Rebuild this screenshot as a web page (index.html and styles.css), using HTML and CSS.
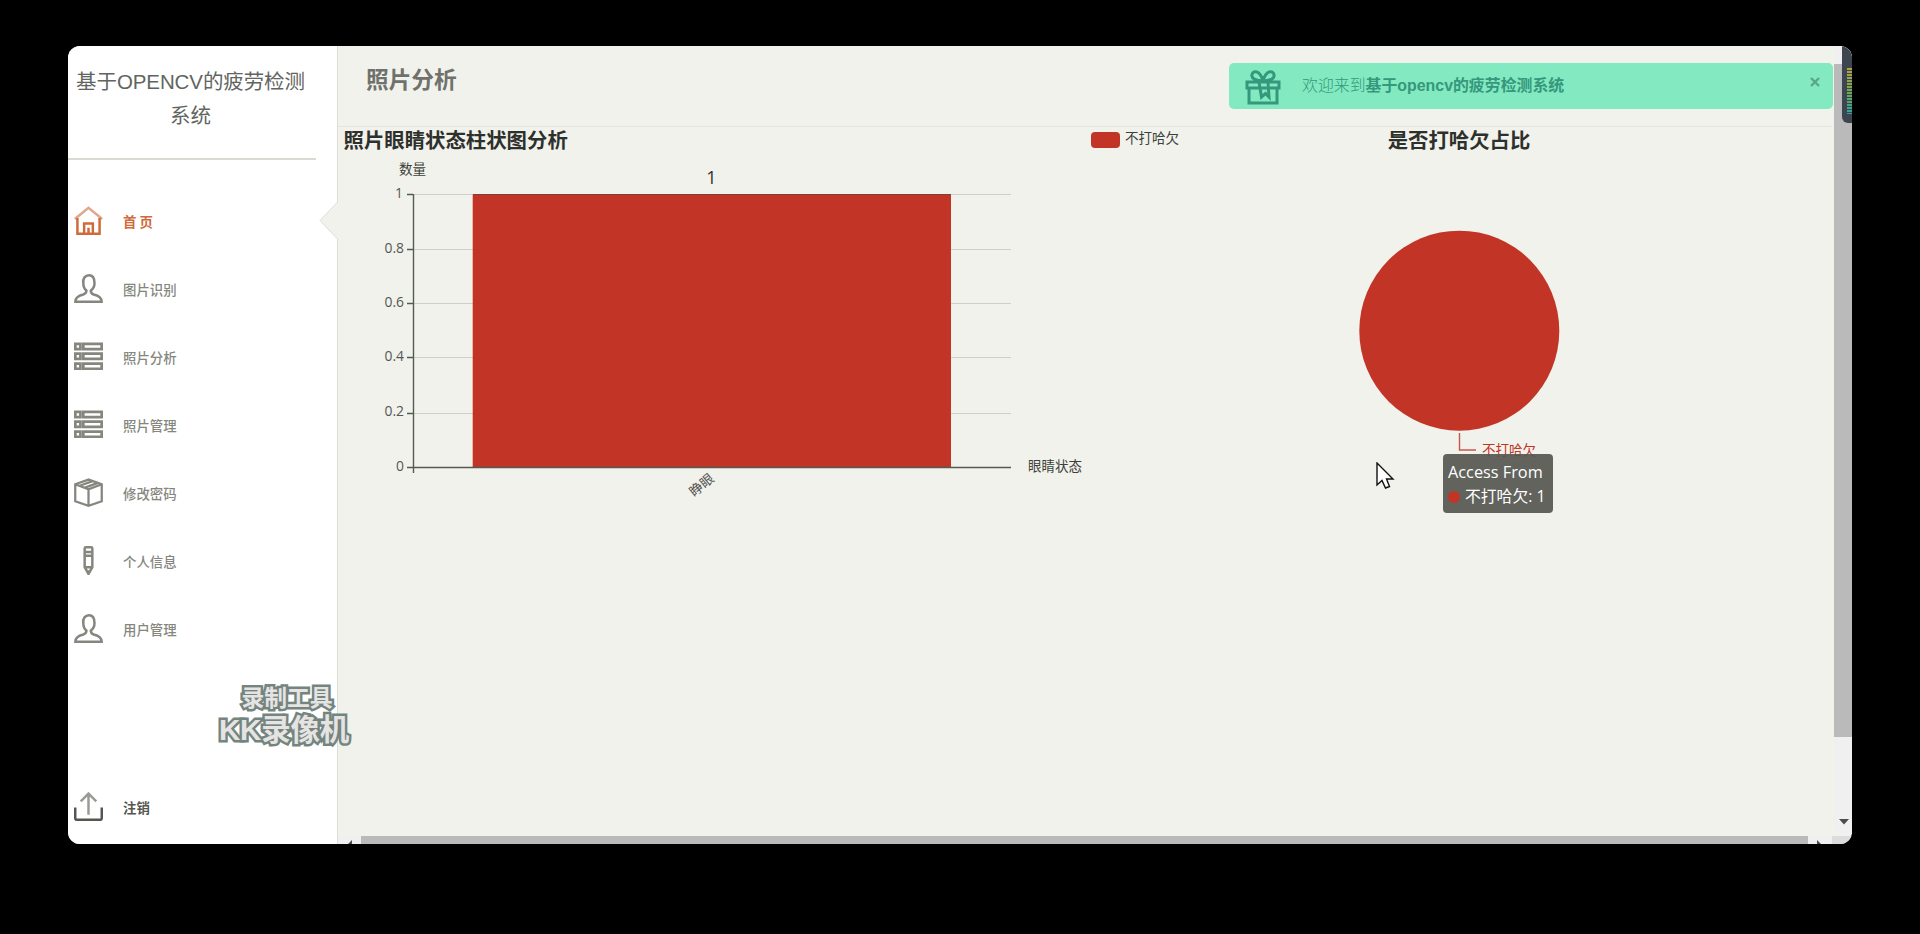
FILE: index.html
```html
<!DOCTYPE html>
<html lang="zh-CN">
<head>
    <meta charset="UTF-8">
    <meta name="viewport" content="width=device-width, initial-scale=1.0">
    <title>照片分析</title>
    <link rel="stylesheet" href="styles.css">
</head>
<body>
    <!-- shared icons -->
    <svg class="defs">
        <symbol id="icon-user" viewBox="0 0 28 28">
            <path d="M1.300 26.800h25.400c0-4.500-3.600-6-7.700-7-2-.6-2.800-1.200-2.800-3.800 2.300-1.500 3.600-4 3.600-7C19.800 4 18 1.300 14.500 1.300S8.200 4 9 9c0 3 1 5.500 3 7 0 2.600-1 3.200-3 3.800-4.100 1-7.700 2.500-7.700 7z"/>
        </symbol>
        <symbol id="icon-list" viewBox="0 0 28 28">
            <path d="M1.300 1.800h4.900v5H1.300zM9 1.800h17.700v5H9zM1.300 11.300h4.900v5H1.300zM9 11.300h17.700v5H9zM1.300 20.800h4.900v5H1.300zM9 20.800h17.700v5H9z"/>
        </symbol>
    </svg>

    <div class="window">
        <div class="sidebar">
            <div class="logo">基于OPENCV的疲劳检测系统</div>
            <ul class="nav">
                <li class="active">
                    <svg class="icon" viewBox="0 0 28 28"><path class="roof" d="M.8 12.500L14 1.800l13.200 10.700"/><path d="M3.300 11.500v15.200h21.400V11.500M9.800 27V17h8.400v10M14 27v-6"/></svg>
                    <p>首 页</p>
                </li>
                <li><svg class="icon"><use href="#icon-user"/></svg><p>图片识别</p></li>
                <li><svg class="icon list"><use href="#icon-list"/></svg><p>照片分析</p></li>
                <li><svg class="icon list"><use href="#icon-list"/></svg><p>照片管理</p></li>
                <li>
                    <svg class="icon box" viewBox="0 0 28 28"><path d="M14 1.500L1.200 6v16.500L14 26.800l12.800-4.300V6zM1.200 6L14 11l12.800-5M14 11v16M5.500 7.500L18 3M10 9.500L22.500 5"/></svg>
                    <p>修改密码</p>
                </li>
                <li>
                    <svg class="icon" viewBox="0 0 28 28"><path d="M11.500 1.300h5q1.200 0 1.200 1.200v18L14 27l-3.700-6.500v-18q0-1.200 1.200-1.200zM10.500 5.800h7M10.500 9.500h7M10.500 20.500h7M13 24.500h2"/></svg>
                    <p>个人信息</p>
                </li>
                <li><svg class="icon"><use href="#icon-user"/></svg><p>用户管理</p></li>
                <li class="logout">
                    <svg class="icon" viewBox="0 0 28 28"><path class="arrow" d="M14 22V1.500M6.500 9L14 1.500 21.500 9"/><path d="M1.200 15v10q0 1.800 1.800 1.800h22q1.800 0 1.800-1.800V15"/></svg>
                    <p>注销</p>
                </li>
            </ul>
            <svg class="pointer" width="19" height="38" viewBox="0 0 19 38"><path class="fill" d="M19 0L1 18.500 19 37z"/><path class="edge" d="M18.500 0L1 18.500 18.500 37"/></svg>
        </div>

        <div class="main">
            <div class="navbar">
                <span class="brand">照片分析</span>
            </div>
            <div class="charts">
                <svg class="chart" width="748" height="400" viewBox="0 0 748 400">
                    <text class="title" x="5.500" y="21">照片眼睛状态柱状图分析</text>
                    <text class="label" x="74.500" y="47" text-anchor="middle">数量</text>
                    <path class="grid" d="M76 67.500H673M76 122.500H673M76 176.500H673M76 230.500H673M76 286.500H673"/>
                    <rect class="bar" x="134.700" y="67.500" width="478.300" height="273"/>
                    <path class="bar-top" d="M135 67.500H613"/>
                    <path class="axis" d="M75.500 67V346M69 67.500H75M69 122.500H75M69 176.500H75M69 230.500H75M69 286.500H75M69 340.500H673"/>
                    <g class="label num" text-anchor="end">
                        <text x="65" y="71">1</text>
                        <text x="66" y="126">0.8</text>
                        <text x="66" y="180">0.6</text>
                        <text x="66" y="234">0.4</text>
                        <text x="66" y="289">0.2</text>
                        <text x="66" y="344">0</text>
                    </g>
                    <text class="value" x="373.500" y="57" text-anchor="middle">1</text>
                    <text class="label cat" transform="translate(377 353) rotate(-40)" text-anchor="end">睁眼</text>
                    <text class="label" x="690" y="344">眼睛状态</text>
                </svg>
                <svg class="chart" width="748" height="400" viewBox="0 0 748 400">
                    <rect class="bar" x="5" y="5" width="29" height="16" rx="4"/>
                    <text class="label" x="39" y="16">不打哈欠</text>
                    <text class="title" x="373" y="21" text-anchor="middle">是否打哈欠占比</text>
                    <circle class="bar" cx="373.300" cy="203.700" r="100"/>
                    <path class="leader" d="M373.500 306v17H390"/>
                    <text class="label pie-label" x="396" y="328">不打哈欠</text>
                </svg>
            </div>
        </div>

        <div class="alert">
            <svg class="gift" viewBox="0 0 36 36"><path d="M2 13h32v6H2zM4 19h28v15H4zM18 12C12 12 6 10 7 5.500S15 1 18 12zM18 12c6 0 12-2 11-6.500S21 1 18 12zM14 13l2.500 15 4-3.500 3.500 3.500-1-15"/></svg>
            <span>欢迎来到<b>基于opencv的疲劳检测系统</b></span>
            <svg class="close" viewBox="0 0 10 10"><path d="M1 1l8 8M9 1L1 9"/></svg>
        </div>

        <div class="tooltip">
            <div class="name">Access From</div>
            <div><i></i>不打哈欠: 1</div>
        </div>

        <svg class="cursor" width="19" height="28" viewBox="0 0 19 28"><path d="M1 1v22l5-4.500 3.500 7.500 4-1.500-3-7.500H17z"/></svg>

        <div class="scroll-y">
            <div class="thumb"></div>
            <svg class="down" viewBox="0 0 10 6"><path d="M0 0h10L5 5.500z"/></svg>
        </div>
        <div class="scroll-x">
            <svg class="tri" viewBox="0 0 5 10"><path d="M5 0v10L0 5z"/></svg>
            <div class="thumb"></div>
            <svg class="tri" viewBox="0 0 5 10"><path d="M0 0v10l5-5z"/></svg>
        </div>
        <div class="recorder"><div class="meter"></div></div>

        <div class="watermark">
            <div class="small">录制工具</div>
            <div class="big">KK录像机</div>
        </div>
    </div>
</body>
</html>
```

FILE: styles.css
```css
body {
    margin: 0;
    padding: 46px 68px 90px;
    background: #000;
    font-family: "Liberation Sans", "Noto Sans CJK SC", sans-serif;
    overflow: hidden;
}

.defs {
    position: absolute;
    width: 0;
    height: 0;
}

.window {
    position: relative;
    display: flex;
    width: 1784px;
    height: 798px;
    border-radius: 12px;
    overflow: hidden;
    background: #f1f2ec;
}

/* Sidebar */
.sidebar {
    position: relative;
    box-sizing: border-box;
    width: 270px;
    flex: none;
    background: #fff;
    border-right: 1px solid #dcddd8;
}

.logo {
    box-sizing: border-box;
    width: 248px;
    height: 114px;
    padding: 19px 5px 0 2px;
    border-bottom: 2px solid #dadad2;
    color: #62655f;
    font-size: 20.5px;
    line-height: 34px;
    letter-spacing: -0.1px;
    text-align: center;
}

.nav {
    list-style: none;
    margin: 27px 0 0;
    padding: 0;
}

.nav li {
    display: flex;
    align-items: center;
    gap: 20px;
    height: 68px;
    padding-left: 6px;
    color: #85877f;
}

.nav p {
    margin: 0;
    font-size: 13.4px;
    font-weight: 500;
    line-height: 20px;
    font-family: "Noto Sans CJK SC", sans-serif;
}

.nav .active {
    color: #cf6a3b;
}

.nav .active p {
    font-weight: bold;
}

.nav .logout {
    margin-top: 110px;
    color: #54564f;
}

.nav .logout p {
    font-weight: bold;
}

.icon {
    width: 29px;
    height: 29px;
    margin-top: -1px;
    fill: none;
    stroke: currentColor;
    stroke-width: 2.4;
}

.box {
    stroke-width: 2.2;
}

.list {
    stroke-width: 2.6;
}

.roof {
    stroke: #e0a78c;
}

.arrow {
    stroke: #9a9a96;
}

.pointer {
    position: absolute;
    top: 156px;
    right: -1px;
}

.pointer .fill {
    fill: #f1f2ec;
}

.pointer .edge {
    fill: none;
    stroke: #dcddd8;
}

/* Main panel */
.main {
    flex: 1;
}

.navbar {
    box-sizing: border-box;
    height: 81px;
    width: 1494px;
    padding: 17px 28px 0;
    border-bottom: 1px solid #e5e6e1;
}

.brand {
    color: #70716c;
    font-size: 22.7px;
    font-weight: bold;
    line-height: 34px;
}

.charts {
    display: flex;
}

.chart {
    flex: none;
    overflow: visible;
    font-family: "Open Sans", "Noto Sans CJK SC", sans-serif;
}

.title {
    fill: #2e302c;
    font-size: 20.4px;
    font-weight: bold;
}

.label {
    fill: #3d3f3a;
    font-size: 13.5px;
}

.num {
    fill: #555752;
    font-size: 13.9px;
}

.value {
    fill: #333;
    font-size: 18px;
}

.cat {
    fill: #555;
}

.pie-label {
    fill: #c23526;
}

.bar {
    fill: #c23526;
}

.bar-top {
    stroke: #7c4038;
}

.grid {
    fill: none;
    stroke: #cfd0cb;
}

.axis {
    fill: none;
    stroke: #555a52;
    stroke-width: 1.4;
}

.leader {
    fill: none;
    stroke: #c8564a;
    stroke-width: 1.4;
}

/* Welcome notification */
.alert {
    position: absolute;
    top: 17px;
    left: 1161px;
    box-sizing: border-box;
    display: flex;
    align-items: center;
    width: 604px;
    height: 46px;
    padding: 0 13px 0 16px;
    border-radius: 5px;
    background: #82e9c1;
    color: #35977b;
    font-size: 15.9px;
}

.alert span {
    flex: 1;
    margin: -3px 0 0 21px;
    font-weight: 300;
}

.alert b {
    font-weight: bold;
}

.gift {
    width: 36px;
    height: 36px;
    margin-top: 2px;
    fill: none;
    stroke: #35977b;
    stroke-width: 3;
}

.close {
    width: 10px;
    height: 10px;
    margin-bottom: 8px;
    stroke: #5aa68b;
    stroke-width: 2.4;
}

/* Chart tooltip */
.tooltip {
    position: absolute;
    top: 408px;
    left: 1375px;
    box-sizing: border-box;
    width: 110px;
    height: 59px;
    padding: 6px 5px;
    border-radius: 4px;
    background: rgba(86, 87, 80, 0.92);
    color: #fff;
    font: 15.8px/24px "Open Sans", "Noto Sans CJK SC", sans-serif;
    white-space: nowrap;
}

.tooltip .name {
    font-size: 16.3px;
}

.tooltip i {
    display: inline-block;
    width: 12px;
    height: 12px;
    margin-right: 5px;
    border-radius: 50%;
    background: #c23526;
    vertical-align: -1px;
}

.cursor {
    position: absolute;
    top: 416px;
    left: 1308px;
    fill: #fff;
    stroke: #111;
    stroke-width: 1.4;
}

/* Scrollbars */
.scroll-y {
    position: absolute;
    top: 0;
    right: 0;
    width: 18px;
    height: 788px;
    padding-top: 18px;
    box-sizing: border-box;
    background: #f0f0f0;
}

.scroll-y .thumb {
    height: 673px;
    background: #bababa;
}

.scroll-y .down {
    display: block;
    width: 10px;
    height: 6px;
    margin: 82px 0 0 5px;
    fill: #4b4d49;
}

.scroll-x {
    position: absolute;
    left: 270px;
    right: 0;
    bottom: 0;
    display: flex;
    gap: 9px;
    box-sizing: border-box;
    height: 8px;
    padding-left: 9px;
    background: linear-gradient(to right, #f0f0f0 1494px, #dcdcdc 1494px);
    overflow: hidden;
}

.scroll-x .thumb {
    width: 1447px;
    background: #bababa;
}

.scroll-x .tri {
    flex: none;
    width: 5px;
    height: 10px;
    margin-top: 4px;
    fill: #4b4d49;
}

/* Recorder level meter docked to the edge */
.recorder {
    position: absolute;
    top: 0;
    right: 0;
    box-sizing: border-box;
    width: 10px;
    height: 77px;
    padding: 22px 0 0 5px;
    border-radius: 0 0 0 6px;
    background: #3d4551;
}

.meter {
    height: 46px;
    background:
        repeating-linear-gradient(to bottom, transparent 0 2px, #3d4551 2px 3px),
        linear-gradient(to bottom, #b9a13c, #72a850 50%, #2ba59b);
}

.watermark {
    position: absolute;
    top: 637px;
    left: 149px;
    width: 134px;
    color: #e6e3e3;
    font-family: "Liberation Sans", "Noto Sans CJK SC", sans-serif;
    font-weight: bold;
    text-align: center;
    white-space: nowrap;
    -webkit-text-stroke: 5px #74857f;
    paint-order: stroke fill;
}

.watermark .small {
    margin-left: 6px;
    font-size: 22.8px;
    line-height: 31px;
}

.watermark .big {
    font-size: 29.5px;
    line-height: 31px;
    letter-spacing: -0.2px;
}
```
